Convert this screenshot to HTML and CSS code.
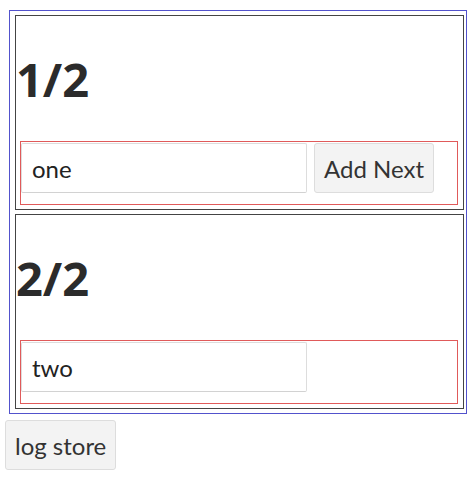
FILE: index.html
```html
<!DOCTYPE html>
<html lang="en">
<head>
  <meta charset="UTF-8">
  <title>Store</title>
  <link rel="stylesheet" href="styles.css">
</head>
<body>
  <div class="store">
    <div class="step">
      <h1>1/2</h1>
      <div class="row">
        <input class="field" type="text" value="one">
        <button class="btn">Add Next</button>
      </div>
    </div>
    <div class="step">
      <h1>2/2</h1>
      <div class="row">
        <input class="field" type="text" value="two">
      </div>
    </div>
  </div>
  <button class="btn log">log store</button>
</body>
</html>
```

FILE: styles.css
```css
body {
  margin: 0;
  font-family: Lato, "Open Sans", sans-serif;
  font-size: 24px;
  color: #333;
}
.store {
  margin: 10px 7px 0 9px;
  padding: 4px 2px 4px 5px;
  border: 1px solid #5252cc;
}
.step {
  border: 1px solid #444;
  width: 447px;
}
.step + .step { margin-top: 4px; }
.step h1 {
  font-family: "Open Sans", sans-serif;
  font-size: 47px;
  line-height: 58px;
  font-weight: 700;
  color: #2b2b2b;
  margin: 34px 0 33px 0;
}
.row {
  display: flex;
  align-items: flex-start;
  gap: 7px;
  margin: 0 5px 4px 4px;
  padding: 1px 0 11px 0;
  border: 1px solid #e05a5a;
}
.field {
  width: 286px;
  height: 50px;
  box-sizing: border-box;
  padding: 0 10px;
  font: inherit;
  color: #222;
  border: 1px solid #ddd;
  border-bottom-color: #d2d2d2;
  border-radius: 2px;
}
.btn {
  height: 50px;
  padding: 0 9px;
  font: inherit;
  color: #333;
  background: #f3f3f3;
  border: 1px solid #ddd;
  border-radius: 3px;
}
.log {
  margin: 6px 0 0 5px;
}
```
